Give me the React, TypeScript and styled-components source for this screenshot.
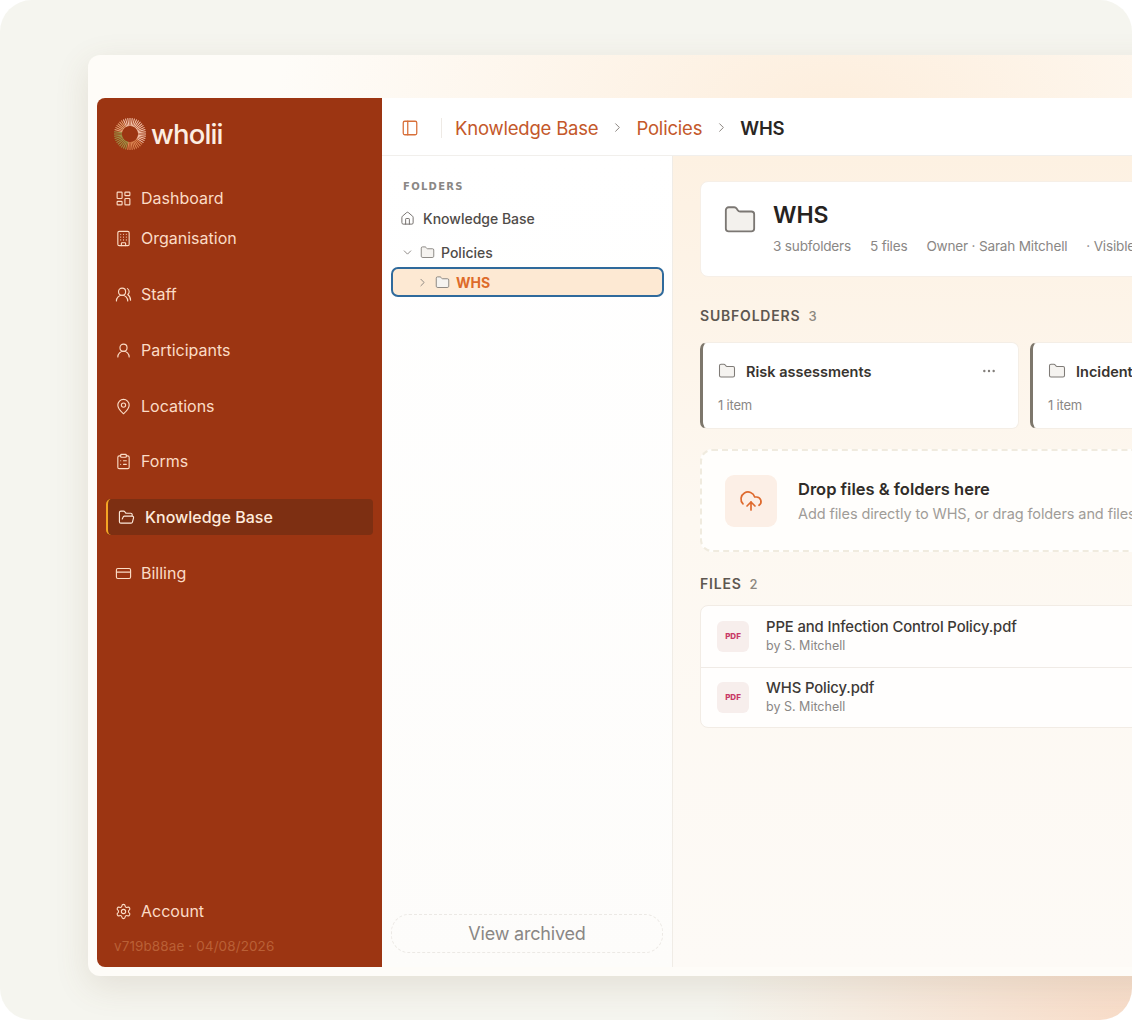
import { FC, ReactNode } from "react";
import styled, { createGlobalStyle } from "styled-components";
import {
    Building,
    ChevronDown,
    ChevronRight,
    ClipboardList,
    CloudUpload,
    CreditCard,
    Ellipsis,
    Folder,
    FolderOpen,
    House,
    LayoutDashboard,
    MapPin,
    PanelLeft,
    Settings,
    UserRound,
    UsersRound,
} from "lucide-react";

const GlobalStyle = createGlobalStyle`
    html, body {
        margin: 0;
        padding: 0;
        background: #ffffff;
        font-family: Inter, "Open Sans", sans-serif;
    }
`;

const Page = styled.div`
    box-sizing: border-box;
    width: 1132px;
    height: 1020px;
    overflow: hidden;
    padding: 55px 0 0 88px;
    border-radius: 32px;
    background:
        radial-gradient(420px 220px at 100% 100%, #f8dcc8 0%, rgba(248, 220, 200, 0) 100%),
        #f5f5ef;
`;

const Window = styled.div`
    box-sizing: border-box;
    display: flex;
    width: 1100px;
    height: 921px;
    padding: 43px 0 9px 9px;
    border-radius: 12px;
    background:
        radial-gradient(560px 300px at 68% 6%, #fdeedd 0%, rgba(253, 238, 221, 0) 100%),
        #fefcf8;
    box-shadow: 0 10px 34px rgba(120, 90, 60, 0.14);
`;

const Sidebar = styled.aside`
    box-sizing: border-box;
    flex: 0 0 285px;
    display: flex;
    flex-direction: column;
    padding: 18px 9px 13px 9px;
    background: #9c3512;
    border-radius: 8px 0 0 8px;
    color: #fbdcc6;
`;

const LogoRow = styled.div`
    display: flex;
    align-items: center;
    gap: 4px;
    height: 36px;
    margin: 0 0 28px 7px;
`;

const LogoText = styled.span`
    font-size: 27.5px;
    font-weight: 500;
    letter-spacing: -0.85px;
    color: #fdeee2;
`;

const NavItem = styled.div<{ $active?: boolean; $gap: number }>`
    box-sizing: border-box;
    position: relative;
    display: flex;
    align-items: center;
    gap: ${(props) => (props.$active ? "10px" : "9px")};
    height: 36px;
    margin-bottom: ${(props) => props.$gap}px;
    padding-left: ${(props) => (props.$active ? "12px" : "9px")};
    font-size: 16px;
    font-weight: ${(props) => (props.$active ? 500 : 400)};
    color: ${(props) => (props.$active ? "#fdeadb" : "#fbdcc6")};
    background: ${(props) => (props.$active ? "#7d2f12" : "transparent")};
    border-radius: 4px;

    ${(props) =>
        props.$active &&
        `&::before {
            content: "";
            position: absolute;
            left: 0;
            top: 0;
            bottom: 0;
            width: 3px;
            border-left: 2px solid #f5a524;
            border-radius: 6px 0 0 6px;
        }`}
`;

const NavSpacer = styled.div`
    flex: 1;
`;

const Version = styled.div`
    margin: 5px 0 0 8px;
    font-size: 13.5px;
    letter-spacing: 0.1px;
    color: #ba6036;
`;

const Main = styled.main`
    flex: 1;
    min-width: 0;
    display: flex;
    flex-direction: column;
`;

const TopBar = styled.header`
    box-sizing: border-box;
    flex: 0 0 58px;
    display: flex;
    align-items: center;
    padding: 2px 0 0 19px;
    background: #ffffff;
    border-bottom: 1px solid #f1efec;
    font-size: 18.5px;
`;

const BarDivider = styled.span`
    width: 1px;
    height: 20px;
    margin: 0 13px 0 22px;
    background: #eeeae5;
`;

const Crumb = styled.span<{ $current?: boolean }>`
    color: ${(props) => (props.$current ? "#2a2623" : "#c4582a")};
    font-weight: ${(props) => (props.$current ? 600 : 400)};
    letter-spacing: -0.2px;
`;

const CrumbSep = styled.span`
    display: flex;
    margin: 0 11.5px;
    color: #8b8580;
`;

const Body = styled.div`
    flex: 1;
    min-height: 0;
    display: flex;
`;

const TreePanel = styled.nav`
    box-sizing: border-box;
    flex: 0 0 291px;
    display: flex;
    flex-direction: column;
    padding: 25px 9px 14px 9px;
    background: linear-gradient(180deg, #ffffff 0%, #fdfcfa 100%);
    border-right: 1px solid #f0ece6;
`;

const TreeTitle = styled.div`
    margin: 0 0 12px 12px;
    font-family: "DejaVu Sans", sans-serif;
    font-size: 10px;
    font-weight: 700;
    letter-spacing: 1.3px;
    color: #8a8785;
`;

const TreeRow = styled.div<{ $indent: number; $selected?: boolean; $root?: boolean }>`
    box-sizing: border-box;
    display: flex;
    align-items: center;
    gap: ${(props) => (props.$root ? "8px" : "6px")};
    height: ${(props) => (props.$selected ? "30px" : "29px")};
    margin-bottom: ${(props) => (props.$root ? "5px" : "0")};
    margin-right: ${(props) => (props.$selected ? "-1px" : "0")};
    padding-left: ${(props) => props.$indent}px;
    font-size: 14px;
    font-weight: ${(props) => (props.$selected ? 700 : 500)};
    color: ${(props) => (props.$selected ? "#dd6b2a" : "#4f4b48")};
    background: ${(props) => (props.$selected ? "#fde9d3" : "transparent")};
    border: ${(props) => (props.$selected ? "2px solid #2f6a9c" : "0")};
    border-radius: 7px;
`;

const TreeSpacer = styled.div`
    flex: 1;
`;

const ArchivedButton = styled.div`
    display: flex;
    align-items: center;
    justify-content: center;
    height: 37px;
    border: 1px dashed #ece9e5;
    border-radius: 18px;
    font-size: 18px;
    color: #8a8785;
    letter-spacing: -0.2px;
`;

const Content = styled.section`
    flex: 1;
    min-width: 0;
    padding: 25px 0 0 27px;
    background: linear-gradient(180deg, #fdf1e2 0%, #fdf8f1 45%, #fdfaf6 100%);
`;

const HeaderCard = styled.div`
    box-sizing: border-box;
    display: flex;
    width: 640px;
    height: 96px;
    padding: 19px 0 0 22px;
    gap: 16px;
    background: #ffffff;
    border: 1px solid #f6efe7;
    border-radius: 8px;
`;

const HeaderIcon = styled.div`
    padding-top: 2px;
    color: #7b7773;
`;

const HeaderTitle = styled.h1`
    margin: 0 0 8px;
    font-size: 23px;
    line-height: 28px;
    font-weight: 600;
    color: #26231f;
`;

const MetaRow = styled.div`
    display: flex;
    gap: 19px;
    font-size: 13.6px;
    line-height: 18px;
    letter-spacing: -0.2px;
    white-space: nowrap;
    color: #8a8785;
`;

const SectionLabel = styled.div<{ $top: number; $bottom: number }>`
    display: flex;
    gap: 8px;
    margin: ${(props) => props.$top}px 0 ${(props) => props.$bottom}px;
    font-size: 14px;
    line-height: 18px;
    font-weight: 600;
    letter-spacing: 0.8px;
    color: #5e5750;
`;

const SectionCount = styled.span`
    font-weight: 500;
    font-size: 13px;
    color: #8c8780;
`;

const FolderCards = styled.div`
    display: flex;
    gap: 11px;
    width: 640px;
`;

const FolderCard = styled.div`
    box-sizing: border-box;
    flex: 0 0 319px;
    height: 87px;
    padding: 17px 21px 0 15px;
    background: #ffffff;
    border: 1px solid #f4eee6;
    border-left: 3px solid #7d776c;
    border-radius: 7px;
`;

const FolderCardTop = styled.div`
    display: flex;
    align-items: center;
    gap: 10px;
    height: 22px;
    font-size: 14.5px;
    font-weight: 600;
    color: #38342f;
`;

const FolderName = styled.span`
    flex: 1;
`;

const FolderCount = styled.div`
    margin-top: 15px;
    font-size: 13px;
    letter-spacing: -0.2px;
    color: #8a8785;
`;

const DropZone = styled.div`
    box-sizing: border-box;
    display: flex;
    align-items: center;
    gap: 21px;
    width: 640px;
    height: 103px;
    margin-top: 20px;
    padding-left: 23px;
    background: #fffefc;
    border: 2px dashed #f0ebdf;
    border-radius: 12px;
`;

const DropIcon = styled.div`
    display: flex;
    align-items: center;
    justify-content: center;
    width: 52px;
    height: 52px;
    border-radius: 9px;
    background: #fcefe6;
    color: #de6a2e;
`;

const DropTitle = styled.div`
    margin-bottom: 5px;
    padding-top: 1px;
    font-size: 16.5px;
    line-height: 21px;
    font-weight: 600;
    color: #302c29;
`;

const DropText = styled.div`
    font-size: 14.5px;
    line-height: 18px;
    letter-spacing: -0.1px;
    white-space: nowrap;
    color: #a09c98;
`;

const FileList = styled.div`
    width: 640px;
    background: #fffefd;
    border: 1px solid #f2ece5;
    border-radius: 8px;
`;

const FileRow = styled.div`
    box-sizing: border-box;
    display: flex;
    align-items: center;
    gap: 17px;
    height: 60.5px;
    padding-left: 16px;

    & + & {
        border-top: 1px solid #f0ebe6;
    }
`;

const PdfBadge = styled.div`
    display: flex;
    align-items: center;
    justify-content: center;
    width: 32px;
    height: 31px;
    border-radius: 6px;
    background: #f7eeec;
    font-size: 8px;
    font-weight: 800;
    color: #c93a66;
`;

const FileName = styled.div`
    font-size: 14.8px;
    line-height: 20px;
    font-weight: 500;
    letter-spacing: -0.1px;
    color: #3d3936;
`;

const FileBy = styled.div`
    font-size: 12.5px;
    line-height: 18px;
    color: #8a8785;
`;

const raySpokes = Array.from({ length: 44 }, (_, idx) => (idx * 360) / 44);

const rayColor = (angle: number) => {
    if (angle > 190 && angle < 285) return "#9c9a4a";
    if (angle >= 285 && angle < 330) return "#e8a878";
    if (angle >= 130 && angle <= 190) return "#e08a55";
    return "#f7c9b0";
};

const LogoMark: FC = () => (
    <svg width="34" height="34" viewBox="0 0 34 34" fill="none">
        {raySpokes.map((angle) => (
            <line
                key={angle}
                x1="17"
                y1="9"
                x2="17"
                y2="1"
                stroke={rayColor(angle)}
                strokeWidth="1"
                transform={`rotate(${angle} 17 17)`}
            />
        ))}
    </svg>
);

interface NavEntryProps {
    icon: ReactNode;
    label: string;
    active?: boolean;
    gap?: number;
}

const NavEntry: FC<NavEntryProps> = ({ icon, label, active, gap = 20 }) => (
    <NavItem $active={active} $gap={gap}>
        {icon}
        {label}
    </NavItem>
);

const navIcon = { size: 17, strokeWidth: 1.6 };
const treeFolder = { size: 15, strokeWidth: 1.4, color: "#7f7b77", fill: "#f5f3f0" };

export default function App() {
    return (
        <Page>
            <GlobalStyle />
            <Window>
                <Sidebar>
                    <LogoRow>
                        <LogoMark />
                        <LogoText>wholii</LogoText>
                    </LogoRow>
                    <NavEntry icon={<LayoutDashboard {...navIcon} />} label="Dashboard" gap={4} />
                    <NavEntry icon={<Building {...navIcon} />} label="Organisation" />
                    <NavEntry icon={<UsersRound {...navIcon} />} label="Staff" />
                    <NavEntry icon={<UserRound {...navIcon} />} label="Participants" />
                    <NavEntry icon={<MapPin {...navIcon} />} label="Locations" gap={19} />
                    <NavEntry icon={<ClipboardList {...navIcon} />} label="Forms" />
                    <NavEntry icon={<FolderOpen {...navIcon} />} label="Knowledge Base" active />
                    <NavEntry icon={<CreditCard {...navIcon} />} label="Billing" gap={4} />
                    <NavSpacer />
                    <NavEntry icon={<Settings {...navIcon} />} label="Account" gap={4} />
                    <Version>v719b88ae · 04/08/2026</Version>
                </Sidebar>
                <Main>
                    <TopBar>
                        <PanelLeft size={18} strokeWidth={1.7} color="#d8703a" />
                        <BarDivider />
                        <Crumb>Knowledge Base</Crumb>
                        <CrumbSep>
                            <ChevronRight size={15} strokeWidth={1.6} />
                        </CrumbSep>
                        <Crumb>Policies</Crumb>
                        <CrumbSep>
                            <ChevronRight size={15} strokeWidth={1.6} />
                        </CrumbSep>
                        <Crumb $current>WHS</Crumb>
                    </TopBar>
                    <Body>
                        <TreePanel>
                            <TreeTitle>FOLDERS</TreeTitle>
                            <TreeRow $indent={9} $root>
                                <House size={15} strokeWidth={1.5} color="#6f6b67" />
                                Knowledge Base
                            </TreeRow>
                            <TreeRow $indent={10}>
                                <ChevronDown size={13} strokeWidth={1.6} color="#7f7b77" />
                                <Folder {...treeFolder} />
                                Policies
                            </TreeRow>
                            <TreeRow $indent={23} $selected>
                                <ChevronRight size={13} strokeWidth={1.6} color="#7f7b77" />
                                <Folder {...treeFolder} />
                                WHS
                            </TreeRow>
                            <TreeSpacer />
                            <ArchivedButton>View archived</ArchivedButton>
                        </TreePanel>
                        <Content>
                            <HeaderCard>
                                <HeaderIcon>
                                    <Folder size={34} strokeWidth={1.3} fill="#f3f1ed" />
                                </HeaderIcon>
                                <div>
                                    <HeaderTitle>WHS</HeaderTitle>
                                    <MetaRow>
                                        <span>3 subfolders</span>
                                        <span>5 files</span>
                                        <span>Owner · Sarah Mitchell</span>
                                        <span>· Visible to all staff</span>
                                    </MetaRow>
                                </div>
                            </HeaderCard>
                            <SectionLabel $top={30} $bottom={17}>
                                SUBFOLDERS <SectionCount>3</SectionCount>
                            </SectionLabel>
                            <FolderCards>
                                <FolderCard>
                                    <FolderCardTop>
                                        <Folder {...treeFolder} size={18} />
                                        <FolderName>Risk assessments</FolderName>
                                        <Ellipsis size={16} strokeWidth={1.6} color="#7f7b77" />
                                    </FolderCardTop>
                                    <FolderCount>1 item</FolderCount>
                                </FolderCard>
                                <FolderCard>
                                    <FolderCardTop>
                                        <Folder {...treeFolder} size={18} />
                                        <FolderName>Incident reports</FolderName>
                                    </FolderCardTop>
                                    <FolderCount>1 item</FolderCount>
                                </FolderCard>
                            </FolderCards>
                            <DropZone>
                                <DropIcon>
                                    <CloudUpload size={24} strokeWidth={1.7} />
                                </DropIcon>
                                <div>
                                    <DropTitle>Drop files &amp; folders here</DropTitle>
                                    <DropText>Add files directly to WHS, or drag folders and files from your computer</DropText>
                                </div>
                            </DropZone>
                            <SectionLabel $top={23} $bottom={12}>
                                FILES <SectionCount>2</SectionCount>
                            </SectionLabel>
                            <FileList>
                                <FileRow>
                                    <PdfBadge>PDF</PdfBadge>
                                    <div>
                                        <FileName>PPE and Infection Control Policy.pdf</FileName>
                                        <FileBy>by S. Mitchell</FileBy>
                                    </div>
                                </FileRow>
                                <FileRow>
                                    <PdfBadge>PDF</PdfBadge>
                                    <div>
                                        <FileName>WHS Policy.pdf</FileName>
                                        <FileBy>by S. Mitchell</FileBy>
                                    </div>
                                </FileRow>
                            </FileList>
                        </Content>
                    </Body>
                </Main>
            </Window>
        </Page>
    );
}
